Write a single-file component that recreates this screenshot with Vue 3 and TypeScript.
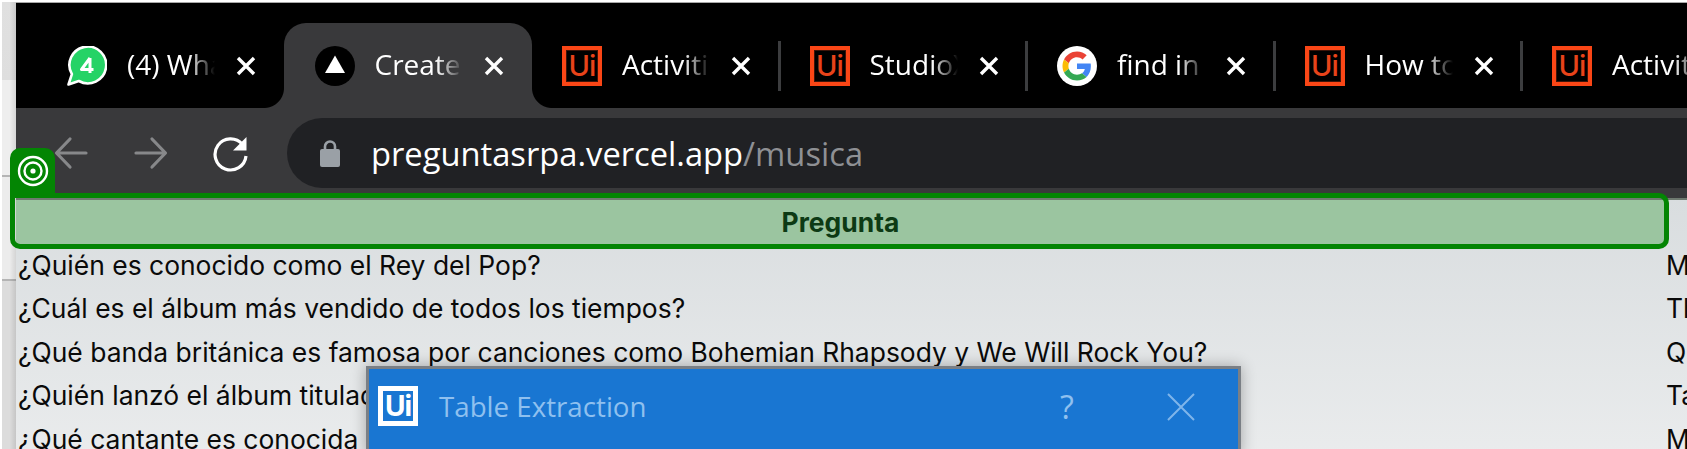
<template>
  <div class="page">
    <div class="side-strip"></div>
    <div class="window">
      <div class="tabstrip">
        <div
          v-for="tab in tabs"
          :key="tab.id"
          class="tab"
          :class="{ active: tab.active, 'no-sep': tab.noSep }"
        >
          <svg v-if="tab.icon === 'whatsapp'" class="favicon" viewBox="0 0 40 40">
            <path d="M1.500 38.500l3.400-10.300A18.400 18.400 0 1 1 11.800 35z" fill="#25d366" stroke="#fff" stroke-width="2.600" stroke-linejoin="round" />
            <path d="M23 12L14.500 23.500h12M23 12v15" fill="none" stroke="#fff" stroke-width="3" stroke-linejoin="round" />
          </svg>
          <svg v-else-if="tab.icon === 'vercel'" class="favicon" viewBox="0 0 40 40">
            <circle cx="20" cy="20" r="20" fill="#000" />
            <path d="M20 9.500L30 27H10z" fill="#fff" />
          </svg>
          <svg v-else-if="tab.icon === 'google'" class="favicon" viewBox="0 0 40 40">
            <circle cx="20" cy="20" r="20" fill="#fff" />
            <g transform="translate(5.500 5.500) scale(0.604)">
              <path d="M24 9.500c3.540 0 6.710 1.220 9.210 3.600l6.850-6.850C35.900 2.380 30.470 0 24 0 14.620 0 6.510 5.380 2.560 13.220l7.980 6.190C12.430 13.720 17.740 9.500 24 9.500z" fill="#ea4335" />
              <path d="M46.980 24.550c0-1.570-.15-3.090-.38-4.550H24v9.020h12.940c-.58 2.960-2.260 5.480-4.780 7.180l7.730 6c4.510-4.180 7.090-10.360 7.090-17.650z" fill="#4285f4" />
              <path d="M10.530 28.590c-.48-1.450-.76-2.990-.76-4.590s.27-3.140.76-4.590l-7.980-6.190C.92 16.460 0 20.120 0 24c0 3.880.92 7.540 2.560 10.780l7.970-6.190z" fill="#fbbc05" />
              <path d="M24 48c6.480 0 11.930-2.130 15.890-5.810l-7.730-6c-2.150 1.450-4.920 2.300-8.160 2.300-6.260 0-11.570-4.220-13.470-9.910l-7.980 6.190C6.510 42.620 14.620 48 24 48z" fill="#34a853" />
            </g>
          </svg>
          <span v-else class="ui-logo">Ui</span>
          <span class="tab-title">{{ tab.title }}</span>
          <svg class="tab-close" viewBox="0 0 20 20">
            <path d="M2 2l16 16M18 2L2 18" stroke="#fff" stroke-width="3.400" fill="none" />
          </svg>
        </div>
      </div>

      <div class="toolbar">
        <svg class="nav-icon back" viewBox="0 0 34 34">
          <path d="M32 17H3M16 3L2.500 17 16 31" fill="none" stroke="#87888a" stroke-width="3.200" stroke-linecap="round" stroke-linejoin="round" />
        </svg>
        <svg class="nav-icon forward" viewBox="0 0 34 34">
          <path d="M2 17h29M18 3l13.500 14L18 31" fill="none" stroke="#87888a" stroke-width="3.200" stroke-linecap="round" stroke-linejoin="round" />
        </svg>
        <svg class="nav-icon reload" viewBox="0 0 36 36">
          <path d="M29.500 8.500A15.500 15.500 0 1 0 33 20" fill="none" stroke="#fff" stroke-width="3.200" />
          <path d="M33.500 1v13.500H20z" fill="#fff" />
        </svg>
        <div class="address-bar">
          <svg class="lock" viewBox="0 0 20 28">
            <path d="M5 11V7.500a5 5 0 0 1 10 0V11" fill="none" stroke="#9aa0a6" stroke-width="2.600" />
            <rect x="0" y="10" width="20" height="18" rx="2" fill="#9aa0a6" />
          </svg>
          <span class="url">preguntasrpa.vercel.app<span class="url-path">/musica</span></span>
        </div>
      </div>

      <div class="table-area">
        <div class="table-head">
          <span>Pregunta</span>
          <div class="highlight">
            <div class="highlight-tab">
              <svg viewBox="0 0 32 32" width="32" height="32">
                <circle cx="16" cy="16" r="14" fill="none" stroke="#fff" stroke-width="2.400" />
                <circle cx="16" cy="16" r="8.500" fill="none" stroke="#fff" stroke-width="2.400" />
                <circle cx="16" cy="16" r="2.600" fill="#fff" />
              </svg>
            </div>
          </div>
        </div>
        <div v-for="row in rows" :key="row.question" class="table-row">
          <span class="cell-question">{{ row.question }}</span>
          <span class="cell-answer">{{ row.answer }}</span>
        </div>
      </div>
    </div>

    <div class="dialog">
      <div class="dialog-bar">
        <span class="dialog-logo">Ui</span>
        <span class="dialog-title">Table Extraction</span>
        <span class="dialog-help">?</span>
        <svg class="dialog-close" viewBox="0 0 28 28">
          <path d="M1 1l26 26M27 1L1 27" stroke="#7fb5ea" stroke-width="2" fill="none" />
        </svg>
      </div>
    </div>
  </div>
</template>

<script setup lang="ts">
interface Tab {
  id: number;
  title: string;
  icon: 'whatsapp' | 'vercel' | 'ui' | 'google';
  active?: boolean;
  noSep?: boolean;
}

const tabs: Tab[] = [
  { id: 1, title: '(4) WhatsApp', icon: 'whatsapp', noSep: true },
  { id: 2, title: 'Create Next App', icon: 'vercel', active: true, noSep: true },
  { id: 3, title: 'Activities', icon: 'ui' },
  { id: 4, title: 'StudioX', icon: 'ui' },
  { id: 5, title: 'find in', icon: 'google' },
  { id: 6, title: 'How to', icon: 'ui' },
  { id: 7, title: 'Activities', icon: 'ui' },
];

const rows = [
  { question: '¿Quién es conocido como el Rey del Pop?', answer: 'Michael Jackson' },
  { question: '¿Cuál es el álbum más vendido de todos los tiempos?', answer: 'Thriller' },
  { question: '¿Qué banda británica es famosa por canciones como Bohemian Rhapsody y We Will Rock You?', answer: 'Queen' },
  { question: '¿Quién lanzó el álbum titulado 1989?', answer: 'Taylor Swift' },
  { question: '¿Qué cantante es conocida como la Reina del Pop?', answer: 'Madonna' },
];
</script>

<style scoped>
.page {
  position: relative;
  display: flex;
  width: 1687px;
  height: 449px;
  overflow: hidden;
  background: #fff;
  padding-top: 2px;
  box-sizing: border-box;
}

.side-strip {
  width: 14px;
  margin-left: 2px;
  flex-shrink: 0;
  background:
    linear-gradient(to right, rgba(0, 0, 0, 0) 55%, rgba(0, 0, 0, 0.1) 100%),
    linear-gradient(
      to bottom,
      #e0e0e0 0,
      #dedede 78px,
      #eeeeee 78px,
      #eeeeee 173px,
      #b4b4b4 173px,
      #b4b4b4 175px,
      #ececec 175px,
      #ececec 277px,
      #b4b4b4 277px,
      #b4b4b4 279px,
      #dcdcdc 279px
    );
}

.window {
  flex: 1;
  min-width: 0;
  display: flex;
  flex-direction: column;
  border-top: 1px solid #a8a8a8;
}

.tabstrip {
  height: 105px;
  flex-shrink: 0;
  box-sizing: border-box;
  padding: 20px 0 0 20.5px;
  display: flex;
  background: #000;
}

.tab {
  position: relative;
  width: 247.5px;
  flex-shrink: 0;
  height: 85px;
  box-sizing: border-box;
  padding: 23px 0 0 30.5px;
  display: flex;
  align-items: flex-start;
}

.tab:not(.no-sep)::after {
  content: '';
  position: absolute;
  right: -1.5px;
  top: 18px;
  width: 3px;
  height: 50px;
  background: #3c3d3f;
}

.tab.active {
  background: #39393b;
  border-radius: 22px 22px 0 0;
}

.tab.active::before,
.tab.active::after {
  content: '';
  position: absolute;
  bottom: 0;
  width: 20px;
  height: 20px;
}

.tab.active::before {
  left: -20px;
  background: radial-gradient(circle at 0 0, #000 19.5px, #39393b 20.5px);
}

.tab.active::after {
  right: -20px;
  background: radial-gradient(circle at 100% 0, #000 19.5px, #39393b 20.5px);
}

.favicon {
  width: 40px;
  height: 40px;
  flex-shrink: 0;
}

.ui-logo {
  width: 40px;
  height: 40px;
  flex-shrink: 0;
  box-sizing: border-box;
  border: 4px solid #fa4616;
  background: #000;
  box-shadow: inset 0 0 0 1px #3d1409;
  color: #e8431a;
  font-family: Inter, sans-serif;
  font-size: 29px;
  font-weight: 500;
  line-height: 32px;
  letter-spacing: -1px;
  text-align: center;
  overflow: hidden;
}

.tab-title {
  width: 88px;
  margin-left: 20px;
  overflow: hidden;
  white-space: nowrap;
  color: #fff;
  font-family: 'Open Sans', sans-serif;
  font-size: 28px;
  line-height: 36px;
  -webkit-mask-image: linear-gradient(to right, #000 70%, transparent 100%);
  mask-image: linear-gradient(to right, #000 70%, transparent 100%);
}

.tab-close {
  width: 20px;
  height: 20px;
  margin: 10px 0 0 21px;
  flex-shrink: 0;
}

.toolbar {
  height: 90px;
  flex-shrink: 0;
  box-sizing: border-box;
  padding-top: 10px;
  display: flex;
  align-items: flex-start;
  background: #39393b;
}

.nav-icon {
  flex-shrink: 0;
  margin-top: 18px;
}

.back {
  width: 34px;
  height: 34px;
  margin-left: 38px;
}

.forward {
  width: 34px;
  height: 34px;
  margin-left: 46px;
}

.reload {
  width: 36px;
  height: 36px;
  margin-left: 45px;
}

.address-bar {
  flex: 1;
  height: 70px;
  margin-left: 38px;
  display: flex;
  align-items: center;
  padding-left: 33px;
  background: #202124;
  border-radius: 35px 0 0 35px;
}

.lock {
  width: 20px;
  height: 28px;
}

.url {
  margin-left: 31px;
  color: #fff;
  font-family: 'Open Sans', sans-serif;
  font-size: 32.7px;
  white-space: nowrap;
}

.url-path {
  color: #8e9094;
}

.table-area {
  flex: 1;
  background: linear-gradient(to bottom, #d9dddf 0, #eaeced 100%);
  border-top: 2px solid #6f7a70;
  font-family: Inter, sans-serif;
  font-size: 26.45px;
  color: #0a0a0a;
}

.table-head {
  position: relative;
  height: 43px;
  width: 1649px;
  display: flex;
  align-items: center;
  justify-content: center;
  padding-bottom: 1px;
  box-sizing: content-box;
  margin-bottom: -1px;
  background: #9bc5a0;
  color: #0d3a14;
  font-weight: 700;
}

.highlight {
  position: absolute;
  left: -6px;
  top: -7px;
  width: 1659px;
  height: 56px;
  box-sizing: border-box;
  border: 5px solid #038503;
  border-radius: 0 10px 10px 10px;
}

.highlight-tab {
  position: absolute;
  left: -5px;
  bottom: 100%;
  width: 45px;
  height: 50px;
  box-sizing: border-box;
  padding-bottom: 5px;
  display: flex;
  align-items: center;
  justify-content: center;
  background: #038503;
  border-radius: 10px 10px 0 0;
}

.table-row {
  display: flex;
  height: 43.5px;
  align-items: center;
  white-space: nowrap;
}

.cell-question {
  width: 1650px;
  flex-shrink: 0;
  padding-left: 2px;
  box-sizing: border-box;
}

.dialog {
  position: absolute;
  left: 366px;
  top: 366px;
  width: 875px;
  height: 90px;
  box-sizing: border-box;
  border: 3px solid #7a7f85;
  background: #1976d2;
  box-shadow: 0 0 14px rgba(0, 0, 0, 0.3);
}

.dialog-bar {
  display: flex;
  align-items: flex-start;
  padding: 17px 0 0 9px;
  color: #8fc0ef;
}

.dialog-logo {
  width: 40px;
  height: 40px;
  flex-shrink: 0;
  box-sizing: border-box;
  border: 5px solid #fff;
  color: #fff;
  font-family: Inter, sans-serif;
  font-size: 28px;
  font-weight: 700;
  line-height: 30px;
  letter-spacing: -1px;
  text-align: center;
  overflow: hidden;
}

.dialog-title {
  margin-left: 21px;
  width: 621px;
  font-family: 'Open Sans', sans-serif;
  font-size: 27.7px;
  line-height: 40px;
}

.dialog-help {
  width: 20px;
  font-family: 'Open Sans', sans-serif;
  font-size: 32px;
  line-height: 42px;
}

.dialog-close {
  width: 28px;
  height: 28px;
  margin: 7px 0 0 87px;
}
</style>

<style>
html,
body {
  margin: 0;
  overflow: hidden;
}
</style>
